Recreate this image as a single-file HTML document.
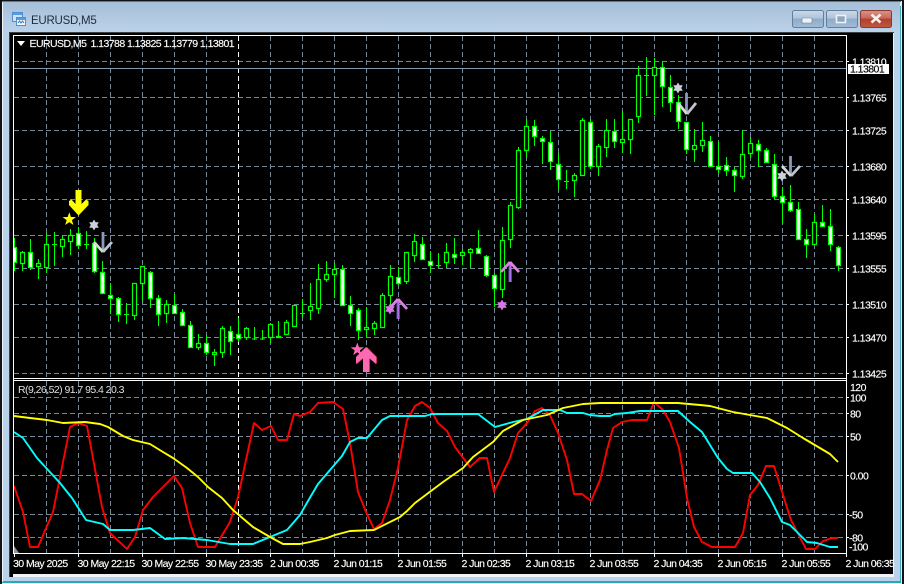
<!DOCTYPE html>
<html><head><meta charset="utf-8"><style>
html,body{margin:0;padding:0;background:#000}
svg{display:block}
text{font-family:"Liberation Sans",sans-serif;font-size:10.5px;fill:#fff;stroke:#fff;stroke-width:.15px;letter-spacing:-.55px}
</style></head><body>
<svg width="904" height="584" viewBox="0 0 904 584" xmlns="http://www.w3.org/2000/svg">
<defs>
<linearGradient id="tb" x1="0" y1="0" x2="0" y2="1"><stop offset="0" stop-color="#a5bfda"/><stop offset=".6" stop-color="#b4cbe2"/><stop offset="1" stop-color="#bad2ea"/></linearGradient>
<linearGradient id="bt" x1="0" y1="0" x2="0" y2="1"><stop offset="0" stop-color="#ccd9e8"/><stop offset=".45" stop-color="#afc4da"/><stop offset=".5" stop-color="#8fabc8"/><stop offset="1" stop-color="#a2bcd8"/></linearGradient>
<linearGradient id="cl" x1="0" y1="0" x2="0" y2="1"><stop offset="0" stop-color="#d8948a"/><stop offset=".45" stop-color="#c8685a"/><stop offset=".5" stop-color="#b04030"/><stop offset="1" stop-color="#c05840"/></linearGradient>
</defs>
<!-- desktop / frame -->
<rect width="904" height="584" fill="#101418"/>
<rect x="2" y="1" width="900" height="583" fill="#e8eef4"/>
<rect x="2" y="1" width="899" height="1" fill="#6e7478"/>
<rect x="3" y="2" width="897" height="580" fill="#b9d2ec"/>
<rect x="3" y="2" width="897" height="31" fill="url(#tb)"/>
<rect x="900" y="6" width="1" height="576" fill="#3fa9b8"/>
<rect x="2" y="581" width="899" height="2" fill="#2aa8b8"/>
<rect x="2" y="2" width="1" height="580" fill="#f0f4f8"/>
<!-- title icon -->
<rect x="12.5" y="12.5" width="10" height="9" fill="#cfe3f7" stroke="#4f8fd0"/><rect x="13" y="13" width="9" height="2" fill="#5a9ae0"/>
<rect x="16.5" y="17.5" width="9" height="8" fill="#f2f8ff" stroke="#4f8fd0"/><rect x="17" y="18" width="8" height="2" fill="#5a9ae0"/>
<path d="M18 23l1.5-2 1.5 2 1.5-2 1.5 2" fill="none" stroke="#3a78b8"/>
<text x="31" y="24" style="font-size:11.5px;fill:#1e2c3c;stroke:none;letter-spacing:-.25px">EURUSD,M5</text>
<!-- buttons -->
<rect x="792.5" y="10.5" width="31" height="17" rx="2" fill="url(#bt)" stroke="#62809e"/>
<rect x="802" y="18" width="10" height="5" rx="1" fill="#eef3f8" stroke="#6a8098" stroke-width=".6"/>
<rect x="826.5" y="10.5" width="31" height="17" rx="2" fill="url(#bt)" stroke="#62809e"/>
<rect x="836.5" y="15.5" width="9" height="7" fill="#8ea6bf" stroke="#eef3f8" stroke-width="1.6"/>
<rect x="860.5" y="10.5" width="31" height="17" rx="2" fill="url(#cl)" stroke="#8a3a2c"/>
<path d="M871.5 14.5l9 8M880.5 14.5l-9 8" stroke="#f4f0ee" stroke-width="2.6" fill="none"/>
<!-- client -->
<rect x="9" y="32" width="885" height="545" fill="#3a3f44"/>
<rect x="10" y="33" width="884" height="544" fill="#eef2f6"/>
<rect x="10" y="33" width="883" height="541" fill="#000"/>
<!-- grid -->
<g fill="none" stroke="#778899" stroke-width="1" stroke-dasharray="5 3">
<path d="M14 61.5H846M14 97.5H846M14 130.5H846M14 166.5H846M14 199.5H846M14 235.5H846M14 268.5H846M14 304.5H846M14 337.5H846M14 373.5H846"/>
<path d="M14 397.5H846M14 413.5H846M14 436.5H846M14 475.5H846M14 514.5H846M14 537.5H846"/>
<path d="M46.5 36V378M110.5 36V378M142.5 36V378M174.5 36V378M206.5 36V378M270.5 36V378M302.5 36V378M334.5 36V378M366.5 36V378M398.5 36V378M430.5 36V378M462.5 36V378M494.5 36V378M526.5 36V378M558.5 36V378M590.5 36V378M622.5 36V378M654.5 36V378M686.5 36V378M718.5 36V378M750.5 36V378M782.5 36V378M814.5 36V378M78.5 36V378"/>
<path d="M46.5 381V553M110.5 381V553M142.5 381V553M174.5 381V553M206.5 381V553M270.5 381V553M302.5 381V553M334.5 381V553M366.5 381V553M398.5 381V553M430.5 381V553M462.5 381V553M494.5 381V553M526.5 381V553M558.5 381V553M590.5 381V553M622.5 381V553M654.5 381V553M686.5 381V553M718.5 381V553M750.5 381V553M782.5 381V553M814.5 381V553M78.5 381V553"/>
<path stroke="#fff" d="M238.5 36V378M238.5 381V553"/>
</g>
<path d="M14 68.5H846" stroke="#8499ae" fill="none"/>
<!-- wicks -->
<path fill="none" stroke="#00ff00" d="M14.5 238V271M22.5 251V271M30.5 239V270M38.5 259V279M46.5 233V273M54.5 232V266M52 244.5h5M62.5 235V257M70.5 229V255M78.5 227V249M86.5 231V249M84 244.5h5M94.5 238V273M102.5 261V294M110.5 283V314M118.5 297V322M126.5 303V324M124 314.5h5M134.5 283V320M142.5 266V302M150.5 271V308M158.5 295V326M166.5 300V323M174.5 294V314M182.5 309V326M190.5 321V348M198.5 334V350M206.5 335V355M214.5 349V366M222.5 326V358M230.5 326V355M238.5 318V342M246.5 327V340M254.5 327V340M252 339h5M262.5 330V340M260 339h5M270.5 323V343M278.5 321V338M286.5 320V335M294.5 305V326M302.5 299V318M300 313.5h5M310.5 283V320M318.5 264V314M326.5 261V282M334.5 263V298M342.5 265V305M350.5 296V326M358.5 308V340M366.5 307V337M374.5 321V335M382.5 293V327M390.5 265V305M398.5 267V285M406.5 252V284M414.5 234V262M422.5 237V260M430.5 251V273M438.5 253V268M436 265.5h5M446.5 243V268M454.5 238V264M462.5 249V265M470.5 248V268M478.5 230V253M486.5 255V277M494.5 273V307M502.5 227V298M510.5 202V248M518.5 147V209M526.5 119V158M534.5 120V146M542.5 136V164M550.5 131V170M558.5 153V189M566.5 170V189M564 181.5h5M574.5 173V197M582.5 118V176M590.5 119V169M598.5 144V176M606.5 119V157M614.5 119V148M622.5 111V153M630.5 119V154M638.5 66V123M646.5 57V96M644 75.5h5M654.5 58V115M662.5 62V107M670.5 75V112M678.5 95V129M686.5 122V154M694.5 129V162M702.5 122V152M710.5 136V167M718.5 142V173M726.5 157V176M734.5 167V192M742.5 130V179M750.5 137V158M758.5 140V167M766.5 148V163M774.5 154V199M782.5 187V223M790.5 185V212M798.5 202V240M806.5 229V258M814.5 214V245M822.5 205V227M830.5 209V251M838.5 246V271"/>
<!-- up candles -->
<path fill="#000" stroke="#00ff00" stroke-width="1.15" d="M20.5 252.5h4v11h-4zM36.5 263.5h4v3h-4zM44.5 244.5h4v23h-4zM60.5 239.5h4v7h-4zM68.5 235.5h4v6h-4zM132.5 283.5h4v32h-4zM140.5 266.5h4v17h-4zM164.5 304.5h4v9h-4zM196.5 343.5h4v4h-4zM212.5 352.5h4v2h-4zM220.5 328.5h4v24h-4zM244.5 328.5h4v9h-4zM268.5 324.5h4v13h-4zM276.5 336.5h4v1h-4zM284.5 322.5h4v12h-4zM292.5 305.5h4v21h-4zM308.5 306.5h4v4h-4zM316.5 279.5h4v29h-4zM324.5 274.5h4v5h-4zM332.5 269.5h4v5h-4zM364.5 327.5h4v2h-4zM372.5 323.5h4v5h-4zM380.5 295.5h4v32h-4zM388.5 276.5h4v19h-4zM404.5 252.5h4v29h-4zM412.5 241.5h4v14h-4zM444.5 252.5h4v10h-4zM460.5 252.5h4v3h-4zM468.5 249.5h4v3h-4zM500.5 240.5h4v49h-4zM508.5 205.5h4v34h-4zM516.5 150.5h4v57h-4zM524.5 126.5h4v24h-4zM572.5 175.5h4v5h-4zM580.5 120.5h4v55h-4zM596.5 146.5h4v20h-4zM604.5 130.5h4v17h-4zM620.5 139.5h4v3h-4zM628.5 119.5h4v20h-4zM636.5 75.5h4v41h-4zM652.5 67.5h4v8h-4zM692.5 145.5h4v4h-4zM700.5 140.5h4v5h-4zM740.5 154.5h4v22h-4zM748.5 143.5h4v10h-4zM812.5 222.5h4v22h-4z"/>
<!-- down candles -->
<path fill="#fff" stroke="#00ff00" stroke-width="1.15" d="M12.5 247.5h4v15h-4zM28.5 252.5h4v15h-4zM76.5 233.5h4v12h-4zM92.5 243.5h4v28h-4zM100.5 272.5h4v21h-4zM108.5 295.5h4v3h-4zM116.5 298.5h4v16h-4zM148.5 272.5h4v26h-4zM156.5 298.5h4v16h-4zM172.5 305.5h4v8h-4zM180.5 312.5h4v13h-4zM188.5 325.5h4v22h-4zM204.5 343.5h4v9h-4zM228.5 331.5h4v10h-4zM236.5 334.5h4v4h-4zM340.5 269.5h4v36h-4zM348.5 305.5h4v8h-4zM356.5 310.5h4v20h-4zM396.5 277.5h4v6h-4zM420.5 244.5h4v15h-4zM428.5 261.5h4v4h-4zM452.5 254.5h4v3h-4zM476.5 248.5h4v5h-4zM484.5 256.5h4v19h-4zM492.5 275.5h4v13h-4zM532.5 126.5h4v10h-4zM540.5 138.5h4v3h-4zM548.5 142.5h4v19h-4zM556.5 164.5h4v15h-4zM588.5 122.5h4v44h-4zM612.5 131.5h4v10h-4zM660.5 67.5h4v19h-4zM668.5 87.5h4v15h-4zM676.5 102.5h4v19h-4zM684.5 122.5h4v27h-4zM708.5 141.5h4v25h-4zM716.5 166.5h4v3h-4zM724.5 165.5h4v5h-4zM732.5 170.5h4v5h-4zM756.5 144.5h4v6h-4zM764.5 150.5h4v12h-4zM772.5 164.5h4v32h-4zM780.5 196.5h4v6h-4zM788.5 202.5h4v8h-4zM796.5 209.5h4v30h-4zM804.5 239.5h4v5h-4zM820.5 222.5h4v4h-4zM828.5 226.5h4v18h-4zM836.5 247.5h4v18h-4z"/>
<!-- arrows / stars -->
<polygon points="75.5,190 81.5,190 81.5,204 86,199.5 88.5,201 88.5,205 78.5,215.5 69,205 69,201 71.5,199.5 75.5,204" fill="#ffff00"/>
<polygon transform="translate(69.3,219.3)" points="0,-7 1.65,-2.27 6.66,-2.16 2.66,.87 4.11,5.66 0,2.8 -4.11,5.66 -2.66,.87 -6.66,-2.16 -1.65,-2.27" fill="#ffff00"/>
<path transform="translate(94,225)" d="M0-5.5L4.8 2.75H-4.8ZM0 5.5L-4.8-2.75H4.8Z" fill="#ccd0dc"/>
<g fill="none" stroke-width="2.8">
<path d="M103 232V252" stroke="#8a9ab8"/><path d="M94 242L103 252" stroke="#d8d8d8"/><path d="M103 252L112 242" stroke="#c0c4d0"/>
<path d="M686.5 93V114" stroke="#8a9ab8"/><path d="M678 103L687 114" stroke="#d8d8d8"/><path d="M687 114L696 103" stroke="#c0c4d0"/>
<path d="M790.5 156V176" stroke="#8a9ab8"/><path d="M782 166L791 176" stroke="#d8d8d8"/><path d="M791 176L800 166" stroke="#c0c4d0"/>
<path d="M398 300V319" stroke="#7b68ee"/><path d="M389 309L398 299" stroke="#e080e0"/><path d="M398 299L407 309" stroke="#e080e0"/><path d="M399 300V319" stroke="#e080e0" stroke-width="1"/>
<path d="M510 263V282" stroke="#7b68ee"/><path d="M501 272L510 262" stroke="#e080e0"/><path d="M510 262L519 272" stroke="#e080e0"/><path d="M511 263V282" stroke="#e080e0" stroke-width="1"/>
</g>
<path transform="translate(678,88)" d="M0-5.5L4.8 2.75H-4.8ZM0 5.5L-4.8-2.75H4.8Z" fill="#ccd0dc"/>
<path transform="translate(782,176)" d="M0-5.5L4.8 2.75H-4.8ZM0 5.5L-4.8-2.75H4.8Z" fill="#ccd0dc"/>
<path transform="translate(390,309)" d="M0-5.5L4.8 2.75H-4.8ZM0 5.5L-4.8-2.75H4.8Z" fill="#d878e0"/>
<path transform="translate(502,305)" d="M0-5.5L4.8 2.75H-4.8ZM0 5.5L-4.8-2.75H4.8Z" fill="#d878e0"/>
<polygon transform="translate(1,0)" points="366,347 376,357 376,364 369,358 369,372 363,372 363,358 356,364 356,357" fill="#c83060"/>
<polygon points="366,347 376,357 376,364 369,358 369,372 363,372 363,358 356,364 356,357" fill="#ff69b4"/>
<polygon transform="translate(357.3,349.5)" points="0,-7 1.65,-2.27 6.66,-2.16 2.66,.87 4.11,5.66 0,2.8 -4.11,5.66 -2.66,.87 -6.66,-2.16 -1.65,-2.27" fill="#ff69b4"/>
<!-- indicators -->
<g fill="none" stroke-width="1.9" stroke-linejoin="round">
<polyline stroke="#ff0000" points="14,486 23,512 30,547 38,547 53,512 70,427 78,423 87,426 102,507 110,533 127,549 135,537 143,510 153,497 174,476 182,488 190,523 198,547 215,547 230,522 238,497 254,423 262,430 271,426 278,440 287,440 294,414 300,416 310,412 318,403 333,402 343,409 350,443 358,492 366,512 374,529 382,523 390,500 398,468 407,420 415,406 422,402 430,408 438,423 447,431 455,447 470,467 480,458 487,458 494,492 510,458 518,433 527,423 535,411 542,408 550,415 558,433 567,460 574,494 582,494 591,501 600,480 607,450 613,428 622,422 632,420 647,420 654,402 663,410 670,422 679,448 687,498 694,527 702,542 712,547 735,547 743,533 750,495 758,485 766,466 774,466 783,495 791,520 806,549 815,549 823,541 832,538 838,538"/>
<polyline stroke="#00ffff" points="14,432 23,438 37,458 60,483 72,498 86,520 103,524 110,530 133,530 150,528 165,539 183,538 207,540 230,544 253,544 270,537 287,530 300,515 308,501 318,484 342,456 350,442 358,438 367,438 382,420 390,416 425,416 432,414 478,414 495,427 513,422 527,419 543,410 560,410 567,413 583,413 590,415 600,416 610,416 615,414 627,413 640,411 678,411 690,422 702,432 718,458 727,469 733,473 752,473 760,482 770,498 782,522 790,525 807,542 817,543 830,547 838,547"/>
<polyline stroke="#ffff00" points="14,416 30,418 47,420 63,423 85,422 100,424 108,427 123,436 133,440 150,444 163,452 173,458 187,468 198,477 208,487 222,498 233,510 253,527 270,537 283,544 300,544 310,542 327,538 335,535 350,531 374,530 400,517 407,511 415,503 423,497 443,482 463,468 473,457 493,442 503,431 523,420 547,415 563,408 583,404 600,403 678,403 700,405 710,406 733,412 767,418 787,428 803,438 830,454 838,462"/>
</g>
<polygon points="14,546 19,553 14,553" fill="#8f96a0"/>
<!-- borders -->
<rect x="10" y="33" width="3" height="544" fill="#000"/>
<path fill="none" stroke="#fff" d="M13.5 35.5H846.5V553.5H13.5ZM13.5 378.5H846.5M13.5 380.5H846.5"/>
<path fill="none" stroke="#fff" d="M847 61.5h2M847 97.5h2M847 130.5h2M847 166.5h2M847 199.5h2M847 235.5h2M847 268.5h2M847 304.5h2M847 337.5h2M847 373.5h2M847 397.5h2M847 413.5h2M847 436.5h2M847 475.5h2M847 514.5h2M847 537.5h2M14.5 554v3M78.5 554v3M142.5 554v3M206.5 554v3M270.5 554v3M334.5 554v3M398.5 554v3M462.5 554v3M526.5 554v3M590.5 554v3M654.5 554v3M718.5 554v3M782.5 554v3M846.5 554v3"/>
<!-- header -->
<polygon points="17,41 25,41 21,46" fill="#fff"/>
<text x="29.5" y="47">EURUSD,M5</text>
<text x="90.5" y="47">1.13788 1.13825 1.13779 1.13801</text>
<text x="18" y="393" style="fill:#e0e0e0;stroke:none">R(9,26,52) 91.7 95.4 20.3</text>
<!-- price labels -->
<text x="852" y="65.5">1.13810</text>
<rect x="848" y="64" width="41" height="10" fill="#fff"/>
<text x="850" y="72.5" style="fill:#000;stroke:#000">1.13801</text>
<text x="852" y="101.5">1.13765</text>
<text x="852" y="134.5">1.13725</text>
<text x="852" y="170.5">1.13680</text>
<text x="852" y="203.5">1.13640</text>
<text x="852" y="239.5">1.13595</text>
<text x="852" y="272.5">1.13555</text>
<text x="852" y="308.5">1.13510</text>
<text x="852" y="341.5">1.13470</text>
<text x="852" y="377.5">1.13425</text>
<text x="850" y="391">120</text>
<text x="850" y="401.5">100</text>
<text x="850" y="417.5">80</text>
<text x="850" y="440.5">50</text>
<text x="850" y="479.5">0.00</text>
<text x="849" y="518.5">-50</text>
<text x="849" y="541.5">-80</text>
<text x="849" y="550.5">-100</text>
<!-- date labels -->
<text x="13" y="567">30 May 2025</text>
<text x="77.5" y="567">30 May 22:15</text>
<text x="141.5" y="567">30 May 22:55</text>
<text x="205.5" y="567">30 May 23:35</text>
<text x="270" y="567">2 Jun 00:35</text>
<text x="333.5" y="567">2 Jun 01:15</text>
<text x="397.5" y="567">2 Jun 01:55</text>
<text x="461.5" y="567">2 Jun 02:35</text>
<text x="525.5" y="567">2 Jun 03:15</text>
<text x="589.5" y="567">2 Jun 03:55</text>
<text x="653.5" y="567">2 Jun 04:35</text>
<text x="717.5" y="567">2 Jun 05:15</text>
<text x="781.5" y="567">2 Jun 05:55</text>
<text x="845.5" y="567">2 Jun 06:35</text>
</svg>
</body></html>
